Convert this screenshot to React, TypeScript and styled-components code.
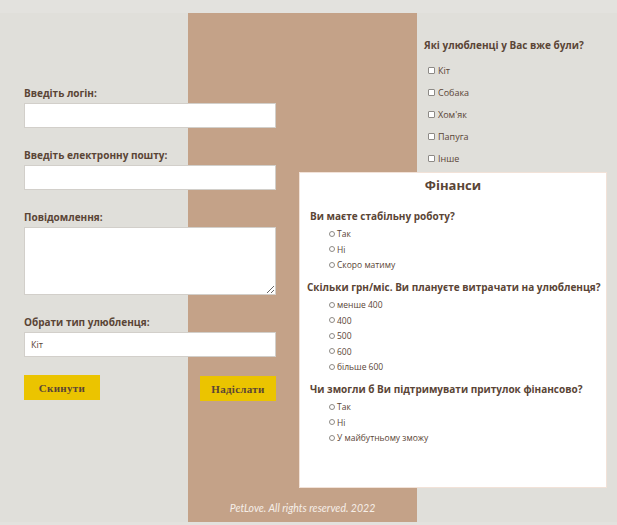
import styled, { createGlobalStyle } from "styled-components";

const GlobalStyle = createGlobalStyle`
  body {
    margin: 0;
    background: #e3e2de;
    font-family: "Open Sans", "Liberation Sans", sans-serif;
    color: #5a4536;
  }
`;

const Page = styled.div`
  padding-top: 13px;
`;

const Main = styled.main`
  background: linear-gradient(
    to right,
    #e0dfda 188px,
    #c4a288 188px,
    #c4a288 417px,
    #e0dfda 417px
  );
  display: grid;
  grid-template-columns: 252px 308px;
  column-gap: 23px;
  align-items: start;
  padding-left: 24px;
`;

const Form = styled.form`
  padding-top: 73px;
  display: flex;
  flex-direction: column;
`;

const Field = styled.div`
  display: flex;
  flex-direction: column;
  margin-bottom: 20px;
`;

const Label = styled.label`
  font-size: 10px;
  font-weight: 700;
  line-height: 14px;
  margin-bottom: 3px;
`;

const TextInput = styled.input`
  box-sizing: border-box;
  width: 100%;
  height: 25px;
  border: 1px solid #d2cfca;
  background: #fff;
  outline: none;
`;

const TextArea = styled.textarea`
  box-sizing: border-box;
  width: 100%;
  height: 68px;
  border: 1px solid #d2cfca;
  background: #fff;
  outline: none;
`;

const Select = styled.select`
  box-sizing: border-box;
  width: 100%;
  height: 25px;
  border: 1px solid #d2cfca;
  background: #fff;
  appearance: none;
  padding-left: 6px;
  font-family: "Open Sans", "Liberation Sans", sans-serif;
  font-size: 9px;
  color: #5a4536;
  outline: none;
`;

const Buttons = styled.div`
  display: flex;
  justify-content: space-between;
  align-items: flex-start;
  margin-top: -2px;
`;

const Button = styled.button<{ $shift?: number }>`
  width: 76px;
  height: 25px;
  margin-top: ${(p) => p.$shift ?? 0}px;
  border: none;
  background: #ebc400;
  color: #5a4536;
  font-family: "Liberation Serif", serif;
  font-weight: 700;
  font-size: 11px;
  letter-spacing: 0.3px;
  cursor: pointer;
`;

const Side = styled.section`
  padding-top: 24px;
`;

const Pets = styled.div`
  padding-left: 125px;
  margin-bottom: 3px;
`;

const Title = styled.h3`
  margin: 0 0 6px;
  font-size: 10px;
  line-height: 16px;
  font-weight: 700;
`;

const CheckRow = styled.label`
  display: flex;
  align-items: center;
  gap: 3px;
  height: 22px;
  padding-left: 4px;
  font-size: 9px;
`;

const Check = styled.input`
  appearance: none;
  box-sizing: border-box;
  width: 7px;
  height: 7px;
  margin: 0;
  border: 1px solid #8d8a86;
  border-radius: 1px;
  background: #fff;
`;

const Panel = styled.div`
  background: #fff;
  border: 1px solid #f2e2d8;
  box-sizing: border-box;
  height: 316px;
  padding-top: 3px;
`;

const PanelTitle = styled.h2`
  margin: 0;
  text-align: center;
  font-size: 13px;
  line-height: 18px;
  font-weight: 700;
`;

const Question = styled.h4<{ $first?: boolean; $indent: number }>`
  margin: ${(p) => (p.$first ? 14 : 6.5)}px 0 2px;
  padding-left: ${(p) => p.$indent}px;
  font-size: 10px;
  line-height: 16px;
  font-weight: 700;
`;

const RadioRow = styled.label`
  display: flex;
  align-items: center;
  gap: 2px;
  height: 15.5px;
  padding-left: 29px;
  font-size: 8.5px;
`;

const Radio = styled.input`
  appearance: none;
  box-sizing: border-box;
  width: 6px;
  height: 6px;
  margin: 0;
  border: 1px solid #8d8a86;
  border-radius: 50%;
  background: #fff;
`;

const Footer = styled.footer`
  grid-column: 1 / -1;
  width: 229px;
  margin-left: 164px;
  padding: 13px 0 7px;
  text-align: center;
  font-family: "Lato", "Open Sans", sans-serif;
  font-style: italic;
  font-size: 10.5px;
  line-height: 14px;
  color: #f6efe8;
`;

const pets = ["Кіт", "Собака", "Хом'як", "Папуга", "Інше"];

const questions = [
  { q: "Ви маєте стабільну роботу?", indent: 10, name: "job", options: ["Так", "Ні", "Скоро матиму"] },
  {
    q: "Скільки грн/міс. Ви плануєте витрачати на улюбленця?",
    indent: 7,
    name: "money",
    options: ["менше 400", "400", "500", "600", "більше 600"],
  },
  {
    q: "Чи змогли б Ви підтримувати притулок фінансово?",
    indent: 10,
    name: "support",
    options: ["Так", "Ні", "У майбутньому зможу"],
  },
];

export default function App() {
  return (
    <Page>
      <GlobalStyle />
      <Main>
        <Form>
          <Field>
            <Label>Введіть логін:</Label>
            <TextInput type="text" />
          </Field>
          <Field>
            <Label>Введіть електронну пошту:</Label>
            <TextInput type="email" />
          </Field>
          <Field>
            <Label>Повідомлення:</Label>
            <TextArea />
          </Field>
          <Field>
            <Label>Обрати тип улюбленця:</Label>
            <Select defaultValue="cat">
              <option value="cat">Кіт</option>
              <option value="dog">Собака</option>
            </Select>
          </Field>
          <Buttons>
            <Button type="reset">Скинути</Button>
            <Button type="button" $shift={1}>
              Надіслати
            </Button>
          </Buttons>
        </Form>
        <Side>
          <Pets>
            <Title>Які улюбленці у Вас вже були?</Title>
            {pets.map((p) => (
              <CheckRow key={p}>
                <Check type="checkbox" />
                {p}
              </CheckRow>
            ))}
          </Pets>
          <Panel>
            <PanelTitle>Фінанси</PanelTitle>
            {questions.map((item, i) => (
              <div key={item.name}>
                <Question $first={i === 0} $indent={item.indent}>
                  {item.q}
                </Question>
                {item.options.map((o) => (
                  <RadioRow key={o}>
                    <Radio type="radio" name={item.name} />
                    {o}
                  </RadioRow>
                ))}
              </div>
            ))}
          </Panel>
        </Side>
        <Footer>PetLove. All rights reserved. 2022</Footer>
      </Main>
    </Page>
  );
}
